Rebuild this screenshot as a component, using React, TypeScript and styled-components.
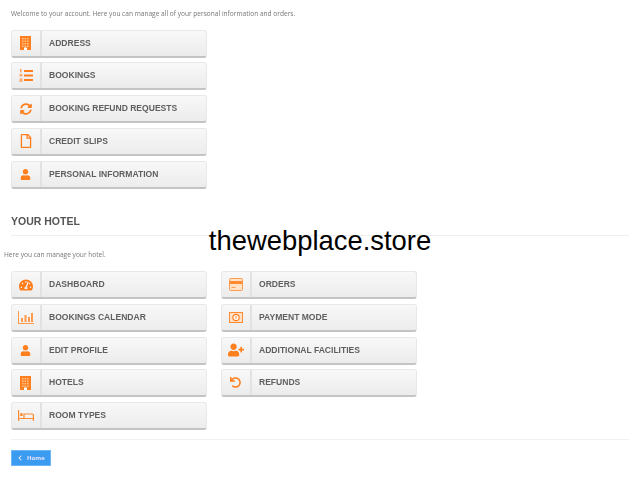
import React from 'react';
import styled, { createGlobalStyle } from 'styled-components';
import {
    FaSyncAlt, FaRegFile, FaUser, FaTachometerAlt,
    FaUserPlus, FaUndo, FaChevronLeft,
} from 'react-icons/fa';

const GlobalStyle = createGlobalStyle`
    html, body {
        margin: 0;
        padding: 0;
        background: #fff;
        font-family: "Open Sans", "Liberation Sans", sans-serif;
    }
`;

const Page = styled.div`
    position: relative;
    width: 640px;
    height: 480px;
    overflow: hidden;
    box-sizing: border-box;
    padding: 9px 11px 0;
`;

const Blurred = styled.div`
    filter: blur(0.4px);
`;

const Intro = styled.p<{ $outdent?: boolean }>`
    margin: 0 0 0 ${({ $outdent }) => ($outdent ? '-7px' : '0')};
    font-size: 6.58px;
    line-height: 9px;
    color: #777;
`;

const LinkList = styled.div`
    margin-top: 11.5px;
    display: grid;
    grid-template-columns: 196px 196px;
    grid-template-rows: repeat(5, 28px);
    grid-auto-flow: column;
    column-gap: 14px;
    row-gap: 4.75px;
`;

const HotelList = styled(LinkList)`
    margin-top: 12px;
`;

const LinkRow = styled.div`
    display: flex;
    align-items: stretch;
    box-sizing: border-box;
    border: 1px solid #e8e8e8;
    border-bottom: 2px solid #c4c4c4;
    border-radius: 3px;
    background: linear-gradient(#f8f8f8, #ececec);
`;

const IconCell = styled.span<{ $size: number }>`
    width: 29.5px;
    flex: none;
    display: flex;
    align-items: center;
    justify-content: center;
    border-right: 2px solid #e2e2e2;
    box-sizing: border-box;
    color: #ff7f1e;
    font-size: ${({ $size }) => $size}px;
`;

const Label = styled.span`
    display: flex;
    align-items: center;
    padding-left: 7.5px;
    padding-bottom: 1px;
    font-family: "Liberation Sans", sans-serif;
    font-size: 8.55px;
    font-weight: 700;
    color: #5f5f5f;
    white-space: nowrap;
`;

const SectionTitle = styled.h2`
    margin: 26.5px 0 0;
    height: 21px;
    box-sizing: border-box;
    border-bottom: 1px solid #eee;
    width: 618px;
    font-family: "Liberation Sans", sans-serif;
    font-size: 10.5px;
    line-height: 12px;
    font-weight: 700;
    color: #555454;
`;

const HotelIntro = styled.div`
    margin-top: 14px;
`;

const Footer = styled.div`
    margin-top: 9px;
    padding-top: 10px;
    width: 618px;
    border-top: 1px solid #f2f2f2;
`;

const HomeButton = styled.a`
    display: flex;
    align-items: center;
    gap: 4px;
    box-sizing: border-box;
    width: 40px;
    height: 16px;
    padding-left: 5px;
    background: #3a9bf0;
    border: 1px solid #6db5f5;
    color: #e8e4fa;
    font-size: 6px;
    font-weight: 700;
`;

const Watermark = styled.div`
    position: absolute;
    left: 0;
    right: 0;
    top: 225px;
    text-align: center;
    font-family: "Liberation Sans", sans-serif;
    font-size: 27.4px;
    line-height: 31px;
    color: #000;
`;

const BuildingIcon = () => (
    <svg width="11" height="14" viewBox="0 0 11 14">
        <rect width="11" height="14" fill="#ff7f1e" />
        {[2, 4.5, 7].map((x) =>
            [2, 4.5, 7, 9.5].map((y) => <rect key={`${x}-${y}`} x={x} y={y} width="1.6" height="1.4" fill="#ffc490" />)
        )}
        <rect x="4" y="11.5" width="3" height="2.5" fill="#fff" />
    </svg>
);

const ListIcon = () => (
    <svg width="14" height="13" viewBox="0 0 14 13" fill="#ff7f1e">
        <rect x="5" y="1" width="9" height="2" />
        <rect x="5" y="5.5" width="9" height="2" />
        <rect x="5" y="10" width="9" height="2" />
        <rect x="1" y="0" width="1.5" height="3.5" opacity="0.7" />
        <rect x="0.5" y="5" width="3" height="2.5" opacity="0.6" />
        <rect x="0.5" y="9.5" width="3" height="3.5" opacity="0.6" />
    </svg>
);

const ChartIcon = () => (
    <svg width="16" height="13" viewBox="0 0 16 13" fill="#ff9a4a">
        <rect x="0" y="0" width="1" height="13" />
        <rect x="0" y="12" width="16" height="1" />
        <rect x="3" y="7" width="2" height="4" />
        <rect x="6.5" y="4" width="2" height="7" />
        <rect x="10" y="6" width="2" height="5" />
        <rect x="13" y="2" width="2" height="9" />
    </svg>
);

const BedIcon = () => (
    <svg width="16" height="11" viewBox="0 0 16 11" fill="none" stroke="#ff8a30" strokeWidth="1.2">
        <path d="M0.6 0V11M15.4 5V11M0.6 8.5H15.4M15.4 5.5C15.4 4.6 14.8 4 14 4H6V8" />
        <rect x="2.2" y="3.2" width="2.4" height="2.8" fill="#ff8a30" stroke="none" />
    </svg>
);

const CardIcon = () => (
    <svg width="14" height="13" viewBox="0 0 14 13">
        <rect x="0.5" y="0.5" width="13" height="12" rx="1" fill="#ffe2c8" stroke="#ff9a4a" />
        <rect x="1" y="3" width="12" height="3" fill="#ff8a30" />
        <rect x="2.5" y="9" width="4" height="1" fill="#ff9a4a" />
    </svg>
);

const CashIcon = () => (
    <svg width="14" height="11" viewBox="0 0 14 11">
        <rect x="0.5" y="0.5" width="13" height="10" fill="#ffe2c8" stroke="#ff8a30" />
        <circle cx="7" cy="5.5" r="3.2" fill="#fff" stroke="#ff7f1e" strokeWidth="1.2" />
        <rect x="6.5" y="3.8" width="1" height="3" fill="#ff7f1e" />
    </svg>
);

interface ILink {
    label: string;
    icon: React.ReactNode;
    size: number;
}

const accountLinks: ILink[] = [
    { label: 'ADDRESS', icon: <BuildingIcon />, size: 14 },
    { label: 'BOOKINGS', icon: <ListIcon />, size: 14 },
    { label: 'BOOKING REFUND REQUESTS', icon: <FaSyncAlt />, size: 12 },
    { label: 'CREDIT SLIPS', icon: <FaRegFile />, size: 14 },
    { label: 'PERSONAL INFORMATION', icon: <FaUser />, size: 11 },
];

const hotelLinks: ILink[] = [
    { label: 'DASHBOARD', icon: <FaTachometerAlt />, size: 14 },
    { label: 'BOOKINGS CALENDAR', icon: <ChartIcon />, size: 14 },
    { label: 'EDIT PROFILE', icon: <FaUser />, size: 11 },
    { label: 'HOTELS', icon: <BuildingIcon />, size: 14 },
    { label: 'ROOM TYPES', icon: <BedIcon />, size: 16 },
    { label: 'ORDERS', icon: <CardIcon />, size: 15 },
    { label: 'PAYMENT MODE', icon: <CashIcon />, size: 15 },
    { label: 'ADDITIONAL FACILITIES', icon: <FaUserPlus />, size: 16 },
    { label: 'REFUNDS', icon: <FaUndo />, size: 11 },
];

const Links = ({ links }: { links: ILink[] }) => (
    <>
        {links.map((link) => (
            <LinkRow key={link.label}>
                <IconCell $size={link.size}>{link.icon}</IconCell>
                <Label>{link.label}</Label>
            </LinkRow>
        ))}
    </>
);

export default function App() {
    return (
        <Page>
            <GlobalStyle />
            <Blurred>
                <Intro>Welcome to your account. Here you can manage all of your personal information and orders.</Intro>
                <LinkList>
                    <Links links={accountLinks} />
                </LinkList>
                <SectionTitle>YOUR HOTEL</SectionTitle>
                <HotelIntro>
                    <Intro $outdent>Here you can manage your hotel.</Intro>
                </HotelIntro>
                <HotelList>
                    <Links links={hotelLinks} />
                </HotelList>
                <Footer>
                    <HomeButton>
                        <FaChevronLeft />
                        Home
                    </HomeButton>
                </Footer>
            </Blurred>
            <Watermark>thewebplace.store</Watermark>
        </Page>
    );
}
